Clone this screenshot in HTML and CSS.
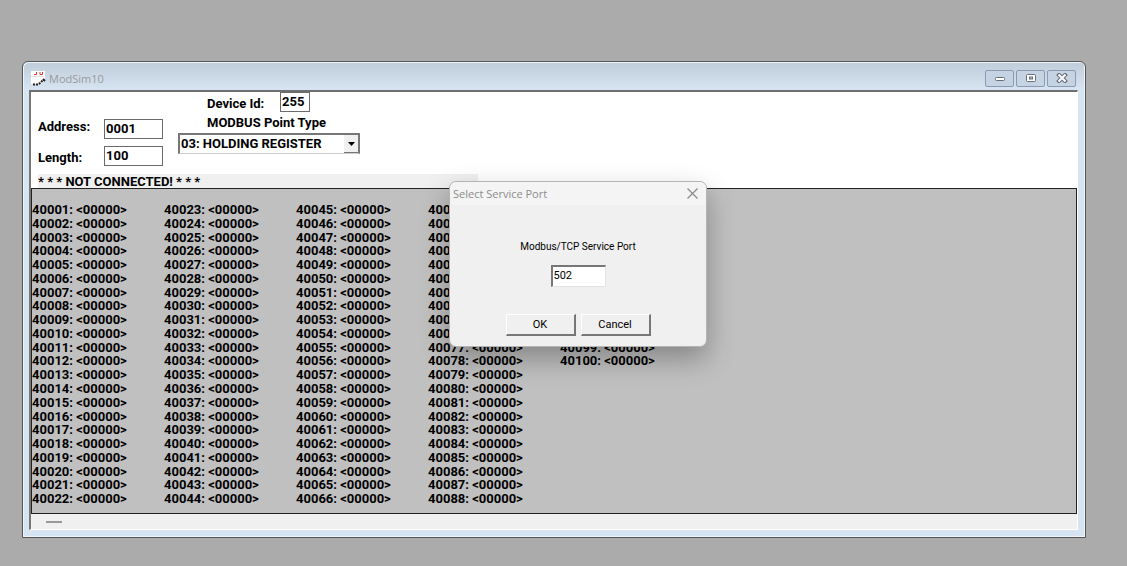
FILE: index.html
```html
<!DOCTYPE html>
<html lang="en">
<head>
<meta charset="utf-8">
<title>ModSim10</title>
<link rel="stylesheet" href="styles.css">
</head>
<body>

<main class="window">
  <header class="titlebar">
    <svg class="app-icon" width="16" height="16" viewBox="0 0 16 16">
      <path d="M1 1h14v9l-4 4H1z" fill="#fff"/>
      <path d="M4 4.500h2.500V2M10 2v2.500h2.500V2" fill="none" stroke="#e23434"/>
      <path d="M1 6.500h13" stroke="#ddd"/>
      <path d="M3 14.500h5l2-1.500 2-2 2-1" fill="none" stroke="#222" stroke-width="2" stroke-dasharray="2 1"/>
      <path d="M13 9l2 2" stroke="#222" stroke-width="2"/>
    </svg>
    <span class="title">ModSim10</span>
    <div class="window-buttons">
      <button type="button" aria-label="Minimize">
        <svg width="12" height="10" viewBox="0 0 12 10"><rect x="1.5" y="4.5" width="9" height="3" rx="1" fill="#fff" stroke="#686d7c"/></svg>
      </button>
      <button type="button" aria-label="Maximize">
        <svg width="12" height="10" viewBox="0 0 12 10"><rect x="1.5" y="1.5" width="9" height="7" rx="1" fill="#fff" stroke="#686d7c"/><rect x="4.5" y="4" width="3" height="2" fill="#b9c8d8" stroke="#686d7c"/></svg>
      </button>
      <button type="button" aria-label="Close">
        <svg width="12" height="10" viewBox="0 0 12 10"><path d="M3 2l6 6M9 2l-6 6" stroke="#686d7c" stroke-width="4" stroke-linecap="square"/><path d="M2.500 1.500l7 7M9.500 1.500l-7 7" stroke="#fff" stroke-width="2"/></svg>
      </button>
    </div>
  </header>

  <div class="client">
    <form class="settings">
      <div class="range">
        <label for="address">Address:</label>
        <input type="text" id="address" value="0001">
        <label for="length" class="length-label">Length:</label>
        <input type="text" id="length" value="100">
      </div>
      <div class="device">
        <div class="device-id">
          <label for="device">Device Id:</label>
          <input type="text" id="device" value="255">
        </div>
        <label for="point" class="point-label">MODBUS Point Type</label>
        <div class="point-select">
          <select id="point">
            <option>03: HOLDING REGISTER</option>
          </select>
          <span class="arrow"><svg width="7" height="4" viewBox="0 0 7 4"><path d="M0 0h7L3.500 4z"/></svg></span>
        </div>
      </div>
    </form>
    <div class="status">* * * NOT CONNECTED! * * *</div>
    <ol class="registers" id="registers"></ol>
    <footer class="footer"><span class="dash"></span></footer>
  </div>
</main>

<!-- Service port dialog -->
<form class="dialog" role="dialog" aria-labelledby="dialog-title">
  <header class="dialog-header">
    <span id="dialog-title">Select Service Port</span>
    <button type="button" class="dialog-close" aria-label="Close">
      <svg width="11" height="11" viewBox="0 0 11 11"><path d="M.5.5l10 10M10.500.5l-10 10" stroke="#8a8a8a" stroke-width="1.200"/></svg>
    </button>
  </header>
  <div class="dialog-body">
    <label for="port">Modbus/TCP Service Port</label>
    <input type="text" id="port" value="502">
    <div class="dialog-buttons">
      <button type="button">OK</button>
      <button type="button">Cancel</button>
    </div>
  </div>
</form>

<script src="script.js"></script>
</body>
</html>
```
FILE: styles.css
```css
* {
  box-sizing: border-box;
}

body {
  display: flex;
  height: 100vh;
  margin: 0;
  padding: 61px 41px 28px 22px;
  background-color: #ababab;
  font-family: Roboto, "Liberation Sans", sans-serif;
  font-size: 13px;
  font-weight: bold;
  color: #000;
}

input, select, button {
  font: inherit;
  color: inherit;
  margin: 0;
}

/* Main window */
.window {
  flex: 1;
  display: flex;
  flex-direction: column;
  padding: 0 7px 7px 6px;
  border: 1px solid #555;
  border-radius: 6px 6px 0 0;
  background: linear-gradient(#bfcddb, #d7e4f2 28px);
  box-shadow: inset 1px 1px 0 #eef5fb, inset -1px -1px 0 #eef5fb;
}

.titlebar {
  display: flex;
  align-items: center;
  gap: 3px;
  height: 28px;
  padding: 4px 2px 0 1px;
}

.title {
  flex: 1;
  font-family: "Open Sans", sans-serif;
  font-size: 11px;
  font-weight: normal;
  color: #9a9a9a;
}

.window-buttons {
  display: flex;
  gap: 2px;
}

.window-buttons button {
  display: flex;
  align-items: center;
  justify-content: center;
  width: 29px;
  height: 17px;
  padding: 0;
  border: 1px solid #8b9ab4;
  border-radius: 2px;
  background: #c5d3e2;
}

.client {
  flex: 1;
  display: flex;
  flex-direction: column;
  min-height: 0;
  border: 1px solid #fff;
  border-top: 2px solid #6e6e6e;
  border-left: 2px solid #777;
  background-color: #fff;
}

/* Address, length and point type */
.settings {
  display: flex;
  gap: 15px;
  height: 82px;
  padding-left: 7px;
}

.settings input {
  width: 100%;
  height: 20px;
  padding: 0 1px 2px;
  border: 1px solid #6a6a6a;
  background-color: #fff;
}

.settings label {
  line-height: 16px;
}

.range {
  display: grid;
  grid-template-columns: 66px 59px;
  grid-auto-rows: 20px;
  row-gap: 7px;
  padding-top: 27px;
}

.length-label {
  align-self: end;
}

.device-id {
  display: grid;
  grid-template-columns: 73px 30px;
  align-items: end;
  padding-left: 29px;
}

.point-label {
  display: block;
  margin: 3px 0 2px 29px;
}

.point-select {
  position: relative;
  width: 182px;
}

.point-select select {
  display: block;
  width: 100%;
  height: 21px;
  padding: 0 1px 1px;
  border: 2px solid #777;
  border-bottom: 1px solid #ccc;
  border-radius: 0;
  appearance: none;
  background-color: #fff;
}

.arrow {
  position: absolute;
  top: 2px;
  right: 1px;
  display: flex;
  align-items: center;
  justify-content: center;
  width: 15px;
  height: 18px;
  border-right: 1px solid #777;
  border-bottom: 1px solid #777;
  background-color: #f0f0f0;
  pointer-events: none;
}

.status {
  width: 440px;
  height: 14px;
  margin-left: 7px;
  line-height: 15px;
  background-color: #f0f0f0;
}

/* Register values, filled column by column */
.registers {
  flex: 1;
  display: grid;
  grid-template-rows: repeat(22, minmax(0, 1fr));
  grid-auto-columns: 132px;
  grid-auto-flow: column;
  min-height: 0;
  margin: 0;
  padding: 14px 0 7px;
  border: 1px solid #222;
  list-style: none;
  line-height: 14px;
  background-color: #c0c0c0;
}

.footer {
  height: 15px;
  padding: 7px 0 0 15px;
  background-color: #f0f0f0;
}

.dash {
  display: block;
  width: 16px;
  height: 2px;
  background-color: #999;
}

/* Dialog */
.dialog {
  position: absolute;
  top: 181px;
  left: 449px;
  width: 258px;
  border: 1px solid #b4b4b4;
  border-radius: 7px;
  background-color: #f0f0f0;
  box-shadow: 0 12px 28px rgba(0, 0, 0, 0.3);
  font-family: Roboto, "Liberation Sans", sans-serif;
  font-size: 11px;
  font-weight: normal;
}

.dialog-header {
  display: flex;
  align-items: center;
  justify-content: space-between;
  height: 23px;
  padding: 0 8px 0 3px;
  border-radius: 7px 7px 0 0;
  background-color: #f4f4f4;
  font-family: "Open Sans", sans-serif;
  color: #8c8c8c;
}

.dialog-close {
  display: flex;
  padding: 0;
  border: none;
  background: none;
}

.dialog-body {
  display: flex;
  flex-direction: column;
  align-items: center;
  padding: 35px 0 10px;
}

.dialog-body label {
  font-size: 10px;
  line-height: 14px;
}

.dialog-body input {
  width: 55px;
  height: 22px;
  margin: 11px 0 27px;
  padding: 0 1px 2px;
  border: 2px solid #777;
  border-right: 1px solid #e3e3e3;
  border-bottom: 1px solid #e3e3e3;
  background-color: #fff;
}

.dialog-buttons {
  display: flex;
  gap: 5px;
}

.dialog-buttons button {
  width: 70px;
  height: 22px;
  padding: 0;
  border: 1px solid #fff;
  border-right: 2px solid #777;
  border-bottom: 2px solid #777;
  background-color: #f0f0f0;
}
```
FILE: script.js
```js
const list = document.getElementById("registers");

for (let i = 1; i <= 100; i++) {
  const item = document.createElement("li");
  item.textContent = (40000 + i) + ": <00000>";
  list.appendChild(item);
}
```
